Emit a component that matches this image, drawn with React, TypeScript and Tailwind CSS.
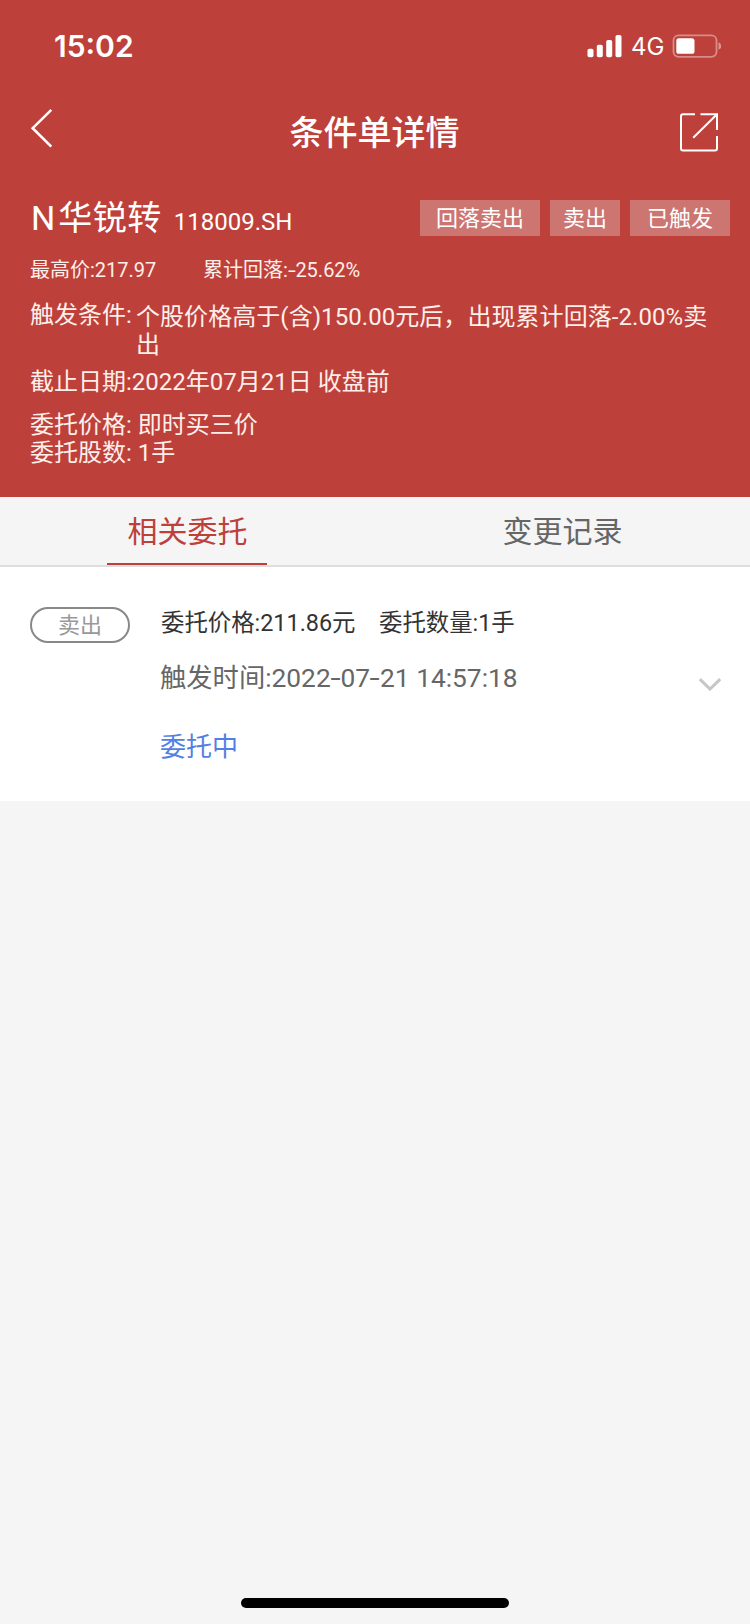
import React from 'react';

const tags = [
  { label: '回落卖出', width: 'w-[120px]' },
  { label: '卖出', width: 'w-[70px]' },
  { label: '已触发', width: 'w-[100px]' },
];

// Slightly wider hyphen for numbers and dates
const Hyphen = () => <span className="mx-[0.05em] inline-block scale-x-[1.4]">-</span>;

const StatusBar = () => (
  <div className="flex h-[92px] items-center justify-between pl-[54px] pr-[29px]">
    <span className="font-['Inter',sans-serif] text-[30px] font-semibold leading-9">15:02</span>
    <div className="flex items-center">
      <svg width="35" height="24" viewBox="0 0 35 24" fill="currentColor">
        <rect x="0.5" y="14.8" width="6" height="8.4" rx="1.8" />
        <rect x="9.8" y="10.8" width="6" height="12.4" rx="1.8" />
        <rect x="19.2" y="6" width="6" height="17.2" rx="1.8" />
        <rect x="28.5" y="1" width="6" height="22.2" rx="1.8" />
      </svg>
      <span className="ml-[9px] mt-0.5 w-[33px] font-['Inter',sans-serif] text-[24px] leading-8">4G</span>
      <svg className="ml-2" width="49" height="24" viewBox="0 0 49 24">
        <rect x="1.5" y="1.3" width="43" height="21.5" rx="5" fill="none" stroke="#fff" strokeOpacity="0.4" strokeWidth="1.8" />
        <rect x="4.3" y="4.3" width="18.2" height="15.5" rx="2.6" fill="#fff" />
        <path d="M46.5 8.4c2 .6 2.800 2 2.800 3.600s-.8 3-2.800 3.600z" fill="#fff" fillOpacity="0.45" />
      </svg>
    </div>
  </div>
);

const NavBar = () => (
  <div className="flex h-20 items-center justify-between pl-[30px] pr-[31px]">
    <svg className="overflow-visible" width="40" height="40" viewBox="0 0 40 40" fill="none" stroke="currentColor" strokeWidth="2.6">
      <path d="M21.300 -2.200L2.700 16.200L21.300 34.600" />
    </svg>
    <h1 className="mt-0.5 text-[34px] font-medium leading-[48px]">条件单详情</h1>
    <svg width="40" height="40" viewBox="0 0 40 40" fill="none" stroke="currentColor" strokeWidth="2">
      <path d="M16 2.300H4a2 2 0 0 0-2 2V36.500a2 2 0 0 0 2 2H36a2 2 0 0 0 2-2V24" />
      <path d="M21.500 2.300H38V18" />
      <path d="M14.200 25.800L37.500 2.800" />
    </svg>
  </div>
);

const Summary = () => (
  <div className="flex flex-col pl-[30px] pr-5">
    <div className="mt-7 flex h-9 items-center justify-between">
      <div className="mt-1 flex items-baseline">
        <span className="ml-px mr-[3px] text-[34px] leading-9">N</span>
        <span className="text-[34px] leading-9 tracking-[0.5px]">华锐转</span>
        <span className="ml-3 text-[24px] leading-9">118009.SH</span>
      </div>
      <div className="flex gap-2.5">
        {tags.map((tag) => (
          <span
            key={tag.label}
            className={`${tag.width} h-9 bg-[#cd7571] text-center text-[22px] leading-[38px]`}
          >
            {tag.label}
          </span>
        ))}
      </div>
    </div>

    <div className="mt-5 flex h-7 text-[20px] leading-7 text-[#ffefeb]">
      <span className="w-[173px]">最高价:217.97</span>
      <span>累计回落:<Hyphen />25.62%</span>
    </div>

    <div className="mt-[17px] flex text-[24px] leading-7 text-[#ffefeb]">
      <span className="w-[106px] shrink-0">触发条件:</span>
      <span className="mt-0.5 tracking-[0.06px]">个股价格高于(含)150.00元后，出现累计回落-2.00%卖出</span>
    </div>
    <p className="mt-[9px] text-[24px] leading-7 text-[#ffefeb]">截止日期:2022年07月21日 收盘前</p>
    <div className="mt-[15px] text-[24px] leading-7 text-[#ffefeb]">
      <p>委托价格: 即时买三价</p>
      <p>委托股数: 1手</p>
    </div>
  </div>
);

const Tabs = () => (
  <div className="flex h-[70px] border-b-2 border-[#dedede] bg-[#f5f5f5] text-[30px]">
    <div className="flex flex-1 flex-col items-center justify-between text-[#bd413a]">
      <span className="mt-3.5 leading-[42px]">相关委托</span>
      <span className="mr-px h-0.5 w-40 bg-[#bd413a]"></span>
    </div>
    <div className="flex flex-1 justify-center text-[#666]">
      <span className="mt-3.5 leading-[42px]">变更记录</span>
    </div>
  </div>
);

const OrderItem = () => (
  <div className="flex h-[234px] bg-white pl-[30px] pr-[29px] pt-10">
    <span className="h-9 w-[100px] shrink-0 rounded-full border-2 border-[#888] text-center text-[22px] leading-[33px] text-[#999]">
      卖出
    </span>
    <div className="ml-[30px] flex-1">
      <div className="ml-px flex text-[23.400px] leading-8 text-[#333]">
        <span className="w-[218px]">委托价格:211.86元</span>
        <span>委托数量:1手</span>
      </div>
      <p className="mt-[21px] text-[26.300px] leading-9 text-[#666]">
        触发时间:2022<Hyphen />07<Hyphen />21 14:57:18
      </p>
      <p className="mt-[33px] text-[26px] leading-9 text-[#527fe4]">委托中</p>
    </div>
    <svg className="mt-[70px]" width="22" height="14" viewBox="0 0 22 14" fill="none" stroke="#c6c6c6" strokeWidth="3">
      <path d="M0.800 2.200L11 12L21.200 2.200" />
    </svg>
  </div>
);

const App = () => {
  return (
    <div className="flex h-[1624px] w-[750px] flex-col bg-[#f5f5f5] font-['Roboto','Noto_Sans_CJK_SC',sans-serif]">
      <header className="h-[497px] bg-[#bd413a] text-white">
        <StatusBar />
        <NavBar />
        <Summary />
      </header>
      <Tabs />
      <OrderItem />
      {/* Home indicator */}
      <div className="mx-auto mb-4 mt-auto h-2.5 w-[268px] rounded-full bg-black"></div>
    </div>
  );
};

export default App;
